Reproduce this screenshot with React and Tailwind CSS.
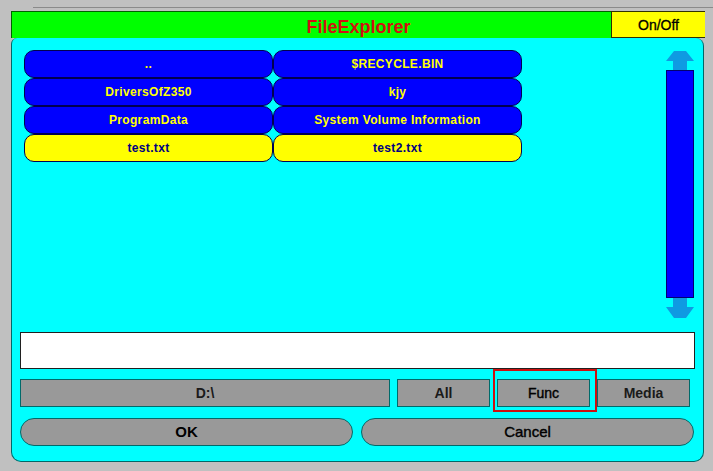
import React from 'react';

const files = [
  { name: '..', sel: false },
  { name: '$RECYCLE.BIN', sel: false },
  { name: 'DriversOfZ350', sel: false },
  { name: 'kjy', sel: false },
  { name: 'ProgramData', sel: false },
  { name: 'System Volume Information', sel: false },
  { name: 'test.txt', sel: true },
  { name: 'test2.txt', sel: true },
];

const ArrowUp = () => (
  <svg width="28" height="19" viewBox="0 0 28 19">
    <polygon points="8,0 20,0 28,10 21,10 21,19 7,19 7,10 0,10" fill="#0f9ae2" />
  </svg>
);

const ArrowDown = () => (
  <svg width="28" height="20" viewBox="0 0 28 20">
    <polygon points="7,0 21,0 21,9 28,9 20,20 8,20 0,9 7,9" fill="#0f9ae2" />
  </svg>
);

const FileCell = ({ name, sel }) => (
  <div
    className={`h-[28px] flex items-center justify-center rounded-[10px] border border-[#000050] text-[12px] font-bold tracking-[0.35px] ${
      sel ? 'bg-[#ffff00] text-[#000080]' : 'bg-[#0000ff] text-[#ffff00]'
    }`}
  >
    {name}
  </div>
);

const GrayBox = ({ children, className = '' }) => (
  <div
    className={`h-[28px] flex items-center justify-center bg-[#999999] border border-[#006a6a] text-[14px] font-bold text-[#1a1a1a] ${className}`}
  >
    {children}
  </div>
);

export default function App() {
  return (
    <div
      className="w-[713px] h-[471px] bg-[#c0c0c0] pl-[11px] pt-[7px] overflow-hidden"
      style={{ fontFamily: '"Liberation Sans", Arial, sans-serif' }}
    >
      {/* window frame line */}
      <div className="w-[680px] ml-[22px] h-[4px] border-t border-[#8a8a8a]" />

      {/* title bar */}
      <div className="flex h-[27px]">
        <div className="w-[600px] bg-[#00ff00] border-l border-t border-[#006000] flex items-end justify-center pb-[2px]">
          <span className="text-[18px] leading-none font-bold text-[#d01010] ml-[94px]">FileExplorer</span>
        </div>
        <div className="w-[94px] bg-[#ffff00] border border-[#303000] border-r-0 flex items-start justify-center pt-[3px]">
          <span className="text-[14px] text-black [-webkit-text-stroke:0.3px_black]">On/Off</span>
        </div>
      </div>

      {/* main panel */}
      <div className="w-[693px] h-[424px] bg-[#00ffff] border-l border-r border-b border-[#006868] rounded-tl-[6px] rounded-tr-[8px] rounded-b-[10px] flex flex-col px-[8px]">
        <div className="h-[294px] flex justify-between">
          <div className="ml-[4px] mt-[12px] grid grid-cols-[249px_249px] auto-rows-[28px] h-fit">
            {files.map((f) => (
              <FileCell key={f.name} name={f.name} sel={f.sel} />
            ))}
          </div>
          <div className="mt-[13px] mr-[1px] w-[28px] flex flex-col">
            <ArrowUp />
            <div className="h-[228px] bg-[#0000ff] border border-[#000070]" />
            <ArrowDown />
          </div>
        </div>

        <div className="h-[37px] bg-white border border-[#202020] w-[675px]" />

        <div className="flex gap-[7px] mt-[10px]">
          <GrayBox className="w-[370px]">D:\</GrayBox>
          <GrayBox className="w-[93px]">All</GrayBox>
          <div className="relative">
            <GrayBox className="w-[93px] font-normal text-black [-webkit-text-stroke:0.4px_black]">Func</GrayBox>
            <div className="absolute -top-[10px] -bottom-[5px] -left-[4px] -right-[7px] border-2 border-[#cc1010]" />
          </div>
          <GrayBox className="w-[93px]">Media</GrayBox>
        </div>

        <div className="flex gap-[8px] mt-[11px]">
          <GrayBox className="w-[333px] rounded-full text-[15px] text-black">OK</GrayBox>
          <GrayBox className="w-[333px] rounded-full text-[15px] font-normal text-black [-webkit-text-stroke:0.4px_black]">Cancel</GrayBox>
        </div>
      </div>
    </div>
  );
}
